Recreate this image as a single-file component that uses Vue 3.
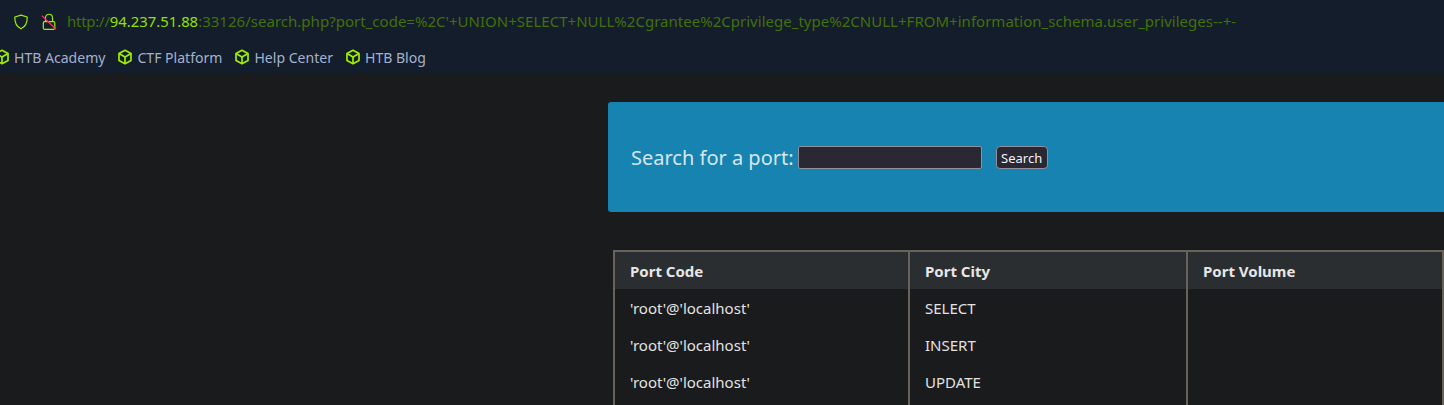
<script setup>
const bookmarks = ['HTB Academy', 'CTF Platform', 'Help Center', 'HTB Blog']
const rows = ['SELECT', 'INSERT', 'UPDATE', '']
</script>

<template>
  <div class="page">
    <header class="chrome">
      <div class="urlbar">
        <svg class="shield" width="16" height="16" viewBox="0 0 16 16" fill="none">
          <path d="M8 1.2 L14.2 3 C14.4 8.5 12.6 12.6 8 14.8 C3.4 12.6 1.6 8.5 1.8 3 Z" stroke="#9fef00" stroke-width="1.2" stroke-linejoin="round"/>
        </svg>
        <svg class="lock" width="16" height="18" viewBox="0 0 16 18" fill="none">
          <path d="M4.5 8.7 V5 C4.5 0 11.5 0 11.5 5 V8.7" stroke="#9fef00" stroke-width="1.2"/>
          <rect x="2.3" y="8.7" width="11.5" height="7.6" rx="1.2" stroke="#9fef00" stroke-width="1.2"/>
          <path d="M1 2.7 L15 16.3" stroke="#ff2d55" stroke-width="1.3"/>
        </svg>
        <div class="url"><span class="scheme">http://</span><span class="host">94.237.51.88</span><span class="rest">:33126/search.php?port_code=%2C'+UNION+SELECT+NULL%2Cgrantee%2Cprivilege_type%2CNULL+FROM+information_schema.user_privileges--+-</span></div>
      </div>
      <nav class="bookmarks">
        <div v-for="b in bookmarks" :key="b" class="bookmark">
          <svg width="16" height="16" viewBox="0 0 16 16" fill="none" stroke="#9fef00" stroke-width="1.7" stroke-linejoin="round">
            <path d="M8 1.3 L14 4.6 V11.4 L8 14.7 L2 11.4 V4.6 Z"/>
            <path d="M2 4.6 L8 8 L14 4.6 M8 8 V14.7"/>
          </svg>
          <span>{{ b }}</span>
        </div>
      </nav>
    </header>
    <main class="content">
      <section class="search">
        <label class="label">Search for a port:</label>
        <input class="input" type="text" />
        <button class="btn">Search</button>
      </section>
      <table class="table">
        <thead>
          <tr><th class="c1">Port Code</th><th class="c2">Port City</th><th>Port Volume</th></tr>
        </thead>
        <tbody>
          <tr v-for="(r, i) in rows" :key="i">
            <td>{{ r ? "'root'@'localhost'" : '' }}</td><td>{{ r }}</td><td></td>
          </tr>
        </tbody>
      </table>
    </main>
  </div>
</template>

<style>
html, body { margin: 0; background: #1a1b1d; overflow: hidden; }
</style>

<style scoped>
.page { width: 1444px; height: 405px; overflow: hidden; background: #1a1b1d; font-family: "Noto Sans", sans-serif; }
.chrome { height: 73px; background: #141d2b; display: flex; flex-direction: column; }
.urlbar { height: 42px; display: flex; align-items: center; padding: 2px 0 0 13px; box-sizing: border-box; }
.shield { margin-right: 12px; }
.lock { margin-right: 10px; }
.url { font-size: 15px; color: #42700a; white-space: nowrap; margin-top: -2px; }
.scheme { letter-spacing: -0.25px; }
.host { color: #93e000; font-size: 14.85px; }
.rest { letter-spacing: 0.02px; }
.bookmarks { height: 31px; display: flex; align-items: center; margin-left: -6px; padding-bottom: 1px; box-sizing: border-box; }
.bookmark { display: flex; align-items: center; gap: 4px; font-size: 14.05px; color: #a4b1cd; margin-right: 12px; }
.content { height: 332px; padding: 29px 0 0 608px; box-sizing: border-box; }
.search { width: 836px; height: 110px; background: #1783b0; border-radius: 3px 0 0 3px; display: flex; align-items: center; padding-left: 23px; box-sizing: border-box; }
.label { font-size: 20px; color: #d6e6ee; margin-right: 4px; }
.input { width: 184px; height: 23px; box-sizing: border-box; background: #2a2833; border: 1px solid #8f8f9d; border-radius: 2px; padding: 0; margin: 0 14px 0 0; outline: none; }
.btn { width: 52px; height: 23px; box-sizing: border-box; background: #2a2833; color: #f3f3f3; border: 1px solid #8f8f9d; border-radius: 4px; padding: 1px 0 0; font-family: "Noto Sans", sans-serif; font-size: 13px; }
.table { margin: 38px 0 0 5px; width: 831px; border-collapse: collapse; table-layout: fixed; border: 2px solid #68625a; color: #e6e6e6; font-size: 15px; }
.table th, .table td { text-align: left; padding: 0 0 0 15px; height: 37px; box-sizing: border-box; border-left: 2px solid #68625a; border-right: 2px solid #68625a; }
.table th { background: #2b2e31; font-weight: 700; height: 38px; }
.c1 { width: 295px; }
.c2 { width: 278px; }
.table td { color: #e2e2e2; }
</style>
